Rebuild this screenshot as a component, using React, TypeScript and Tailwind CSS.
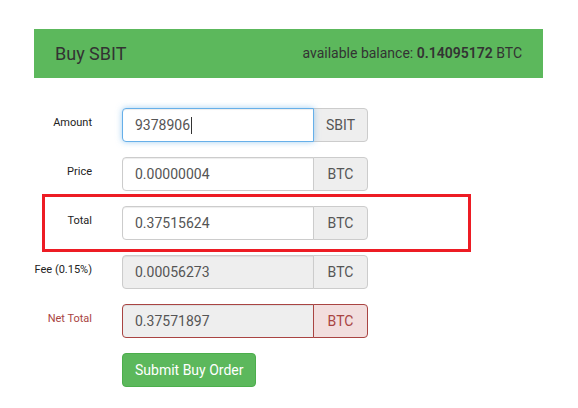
type Row = {
  label: string
  value: string
  unit: string
  kind?: 'focus' | 'disabled' | 'error'
  caret?: boolean
  marked?: boolean
}

const rows: Row[] = [
  { label: 'Amount', value: '9378906', unit: 'SBIT', kind: 'focus', caret: true },
  { label: 'Price', value: '0.00000004', unit: 'BTC' },
  { label: 'Total', value: '0.37515624', unit: 'BTC', marked: true },
  { label: 'Fee (0.15%)', value: '0.00056273', unit: 'BTC', kind: 'disabled' },
  { label: 'Net Total', value: '0.37571897', unit: 'BTC', kind: 'error' },
]

function Field({ row }: { row: Row }) {
  const error = row.kind === 'error'
  const inputCls =
    row.kind === 'focus'
      ? 'border-[#66afe9] bg-white shadow-[inset_0_1px_1px_rgba(0,0,0,0.075),0_0_6px_rgba(102,175,233,0.6)]'
      : row.kind === 'disabled'
        ? 'border-[#ccc] bg-[#eee] shadow-[inset_0_1px_1px_rgba(0,0,0,0.075)]'
        : error
          ? 'border-[#a94442] bg-[#eee] shadow-[inset_0_1px_1px_rgba(0,0,0,0.075)]'
          : 'border-[#ccc] bg-white shadow-[inset_0_1px_1px_rgba(0,0,0,0.075)]'

  return (
    <div className="relative flex items-start gap-[30px]">
      {row.marked && (
        <div className="absolute left-[8px] top-[-12px] h-[58px] w-[429px] border-[3px] border-[#ed1c24]" />
      )}
      <div
        className={`flex w-[58px] justify-end whitespace-nowrap pt-[7px] text-[11px] leading-[16px] ${error ? 'text-[#a94442]' : 'text-[#222]'}`}
      >
        {row.label}
      </div>
      <div className="flex h-[34px] w-[246px]">
        <div
          className={`relative z-10 flex w-[192px] items-center rounded-l-[4px] border pl-[12px] text-[14px] text-[#555] ${inputCls}`}
        >
          {row.value}
          {row.caret && <span className="ml-px inline-block h-[17px] w-px bg-[#333]" />}
        </div>
        <div
          className={`-ml-px flex w-[55px] items-center justify-center rounded-r-[4px] border text-[14px] ${
            error ? 'border-[#a94442] bg-[#f2dede] text-[#a94442]' : 'border-[#ccc] bg-[#eee] text-[#555]'
          }`}
        >
          {row.unit}
        </div>
      </div>
    </div>
  )
}

export default function App() {
  return (
    <div className="min-h-screen bg-white pl-[34px] pt-[29px] font-['Roboto',sans-serif]">
      <div className="flex h-[49px] w-[509px] items-center justify-between bg-[#5cb85c] px-[21px] text-[#333]">
        <h1 className="text-[18px]">Buy SBIT</h1>
        <p className="text-[14px]">
          available balance: <b className="font-semibold">0.14095172</b> BTC
        </p>
      </div>

      <div className="mt-[30px] flex flex-col gap-[15px]">
        {rows.map((r) => (
          <Field key={r.label} row={r} />
        ))}
        <div className="pl-[88px]">
          <button className="h-[34px] rounded-[4px] border border-[#4cae4c] bg-[#5cb85c] px-[12px] text-[14px] text-white">
            Submit Buy Order
          </button>
        </div>
      </div>
    </div>
  )
}
